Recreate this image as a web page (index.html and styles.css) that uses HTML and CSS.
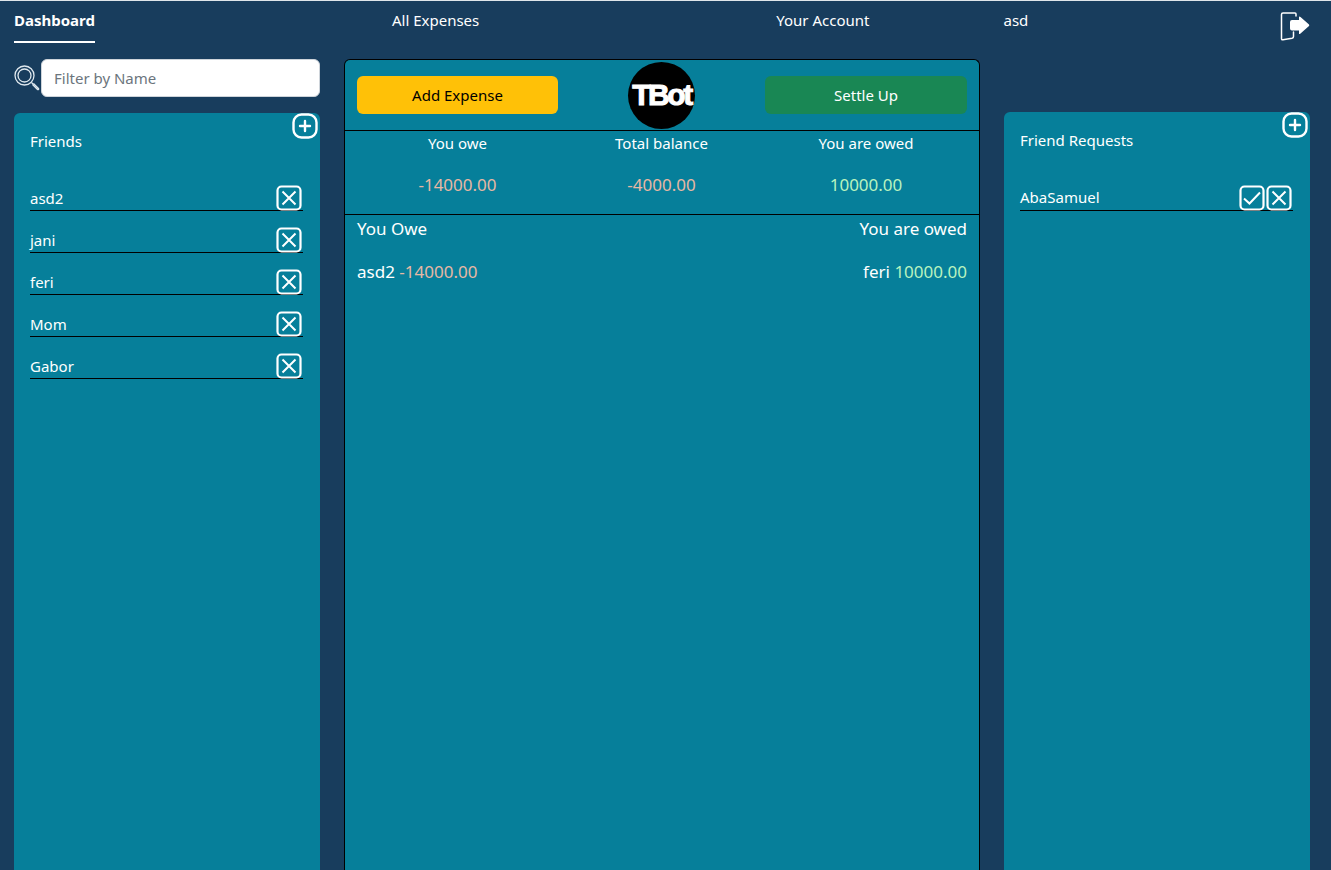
FILE: index.html
```html
<!DOCTYPE html>
<html lang="en">
<head>
    <meta charset="UTF-8">
    <meta name="viewport" content="width=device-width, initial-scale=1.0">
    <title>Dashboard</title>
    <link rel="stylesheet" href="styles.css">
</head>
<body>
    <nav class="topbar">
        <a class="nav-link nav-active">Dashboard</a>
        <a class="nav-link nav-expenses">All Expenses</a>
        <a class="nav-link nav-account">Your Account</a>
        <a class="nav-link nav-user">asd</a>
        <svg class="logout" viewBox="0 0 30 30" width="30" height="30" fill="none">
            <path d="M16 5V3Q16 2 15 2H3Q1.500 2 1.500 3.500V27.500Q1.500 29 3 28.800L12 27.300Q13.500 27 13.500 25.500V21" stroke="#fff" stroke-width="1.500" stroke-linecap="round"/>
            <path d="M10 11q0-2 2-2H19V6Q19 5 20.500 6L29 13.500Q29.500 14.500 29 15L20.500 22.500Q19 23.500 19 22.500V19.500H12q-2 0-2-2Z" fill="#fff"/>
        </svg>
    </nav>

    <main class="layout">
        <section class="col">
            <div class="search-row">
                <svg class="search-icon" viewBox="0 0 26 26" width="26" height="26" fill="none" stroke="#dfe8ee">
                    <circle cx="10.500" cy="10.500" r="9.500" stroke-width="1.300"/>
                    <circle cx="10.500" cy="10.500" r="6.500" stroke-width="1.300"/>
                    <path d="M17.500 17.500l2 2" stroke-width="1.300"/>
                    <path d="M19.500 18.500l5 5M18.500 19.500l5 5M24.500 23.500a.7 .7 0 0 1-1 1" stroke-width="1.300"/>
                </svg>
                <input class="search-input" type="text" placeholder="Filter by Name">
            </div>
            <div class="panel">
                <svg class="icon icon-add" viewBox="0 0 26 26" width="26" height="26" fill="none" stroke="#fff" stroke-width="2.400">
                    <rect x="1.500" y="1.500" width="23" height="23" rx="8"/>
                    <path d="M13 8v10M8 13h10" stroke-linecap="round"/>
                </svg>
                <h2 class="panel-title">Friends</h2>
                <ul class="list">
                    <li class="row"><span class="row-name">asd2</span>
                        <svg class="icon" viewBox="0 0 26 26" width="26" height="26" fill="none" stroke="#fff" stroke-width="2.200"><rect x="1.500" y="1.500" width="23" height="23" rx="4"/><path d="M6.500 6.500l13 13M19.500 6.500l-13 13" stroke-width="2"/></svg>
                    </li>
                    <li class="row"><span class="row-name">jani</span>
                        <svg class="icon" viewBox="0 0 26 26" width="26" height="26" fill="none" stroke="#fff" stroke-width="2.200"><rect x="1.500" y="1.500" width="23" height="23" rx="4"/><path d="M6.500 6.500l13 13M19.500 6.500l-13 13" stroke-width="2"/></svg>
                    </li>
                    <li class="row"><span class="row-name">feri</span>
                        <svg class="icon" viewBox="0 0 26 26" width="26" height="26" fill="none" stroke="#fff" stroke-width="2.200"><rect x="1.500" y="1.500" width="23" height="23" rx="4"/><path d="M6.500 6.500l13 13M19.500 6.500l-13 13" stroke-width="2"/></svg>
                    </li>
                    <li class="row"><span class="row-name">Mom</span>
                        <svg class="icon" viewBox="0 0 26 26" width="26" height="26" fill="none" stroke="#fff" stroke-width="2.200"><rect x="1.500" y="1.500" width="23" height="23" rx="4"/><path d="M6.500 6.500l13 13M19.500 6.500l-13 13" stroke-width="2"/></svg>
                    </li>
                    <li class="row"><span class="row-name">Gabor</span>
                        <svg class="icon" viewBox="0 0 26 26" width="26" height="26" fill="none" stroke="#fff" stroke-width="2.200"><rect x="1.500" y="1.500" width="23" height="23" rx="4"/><path d="M6.500 6.500l13 13M19.500 6.500l-13 13" stroke-width="2"/></svg>
                    </li>
                </ul>
            </div>
        </section>

        <section class="center">
            <div class="center-head">
                <button class="btn btn-yellow">Add Expense</button>
                <div class="logo">TBot</div>
                <button class="btn btn-green">Settle Up</button>
            </div>
            <div class="stats">
                <div class="stat"><div>You owe</div><div class="amount neg">-14000.00</div></div>
                <div class="stat"><div>Total balance</div><div class="amount neg">-4000.00</div></div>
                <div class="stat"><div>You are owed</div><div class="amount pos">10000.00</div></div>
            </div>
            <div class="details">
                <div class="detail-col">
                    <div class="detail-title">You Owe</div>
                    <div class="detail-row">asd2 <span class="neg">-14000.00</span></div>
                </div>
                <div class="detail-col detail-right">
                    <div class="detail-title">You are owed</div>
                    <div class="detail-row">feri <span class="pos">10000.00</span></div>
                </div>
            </div>
        </section>

        <section class="col col-right">
            <div class="panel">
                <svg class="icon icon-add" viewBox="0 0 26 26" width="26" height="26" fill="none" stroke="#fff" stroke-width="2.400">
                    <rect x="1.500" y="1.500" width="23" height="23" rx="8"/>
                    <path d="M13 8v10M8 13h10" stroke-linecap="round"/>
                </svg>
                <h2 class="panel-title">Friend Requests</h2>
                <ul class="list list-requests">
                    <li class="row"><span class="row-name">AbaSamuel</span>
                        <span class="row-actions">
                            <svg class="icon" viewBox="0 0 26 26" width="26" height="26" fill="none" stroke="#fff" stroke-width="2.200"><rect x="1.500" y="1.500" width="23" height="23" rx="4"/><path d="M5 13.500l5.500 5L21 7.500" stroke-width="2"/></svg>
                            <svg class="icon" viewBox="0 0 26 26" width="26" height="26" fill="none" stroke="#fff" stroke-width="2.200"><rect x="1.500" y="1.500" width="23" height="23" rx="4"/><path d="M6.500 6.500l13 13M19.500 6.500l-13 13" stroke-width="2"/></svg>
                        </span>
                    </li>
                </ul>
            </div>
        </section>
    </main>
</body>
</html>
```

FILE: styles.css
```css
html, body {
    height: 100%;
}
body {
    margin: 0;
    overflow: hidden;
    background-color: #183d5d;
    border-top: 1px solid #dfe6ea;
    box-sizing: border-box;
    color: #fff;
    font-family: "Noto Sans", "Open Sans", sans-serif;
    font-size: 15px;
}

/* top navigation */
.topbar {
    display: flex;
    align-items: flex-start;
    height: 58px;
    padding-left: 14px;
    position: relative;
}
.nav-link {
    display: block;
    padding-top: 9px;
    line-height: 21px;
}
.nav-active {
    font-weight: 700;
    height: 31px;
    border-bottom: 2px solid #fff;
}
.nav-expenses {
    margin-left: 297px;
}
.nav-account {
    margin-left: 297px;
}
.nav-user {
    margin-left: 134px;
}
.logout {
    position: absolute;
    left: 1280px;
    top: 10px;
}

/* three columns */
.layout {
    display: grid;
    grid-template-columns: 306px 636px 306px;
    gap: 24px;
    padding-left: 14px;
    height: 811px;
}
.col {
    display: flex;
    flex-direction: column;
    gap: 16px;
}
.col-right {
    padding-top: 53px;
}

.search-row {
    display: flex;
    align-items: center;
    gap: 1px;
    height: 38px;
}
.search-icon {
    flex: none;
}
.search-input {
    flex: 1;
    min-width: 0;
    height: 38px;
    box-sizing: border-box;
    padding: 0 12px;
    border: 1px solid #ced4da;
    border-radius: 6px;
    font-family: inherit;
    font-size: 15px;
    color: #333;
}
.search-input::placeholder {
    color: #6c757d;
}

.panel {
    flex: 1;
    position: relative;
    background-color: #067f9a;
    border-radius: 6px 6px 0 0;
    padding: 16px;
}
.panel-title {
    margin: 0;
    font-size: 15px;
    font-weight: 400;
    line-height: 24px;
}
.icon {
    display: block;
    flex: none;
}
.icon-add {
    position: absolute;
    top: 0;
    right: 2px;
}
.list {
    list-style: none;
    margin: 32px 0 0;
    padding: 0;
}
.list-requests {
    margin-top: 33px;
}
.list-requests .row-name {
    margin-bottom: 2px;
}
.row {
    display: flex;
    justify-content: space-between;
    align-items: flex-end;
    height: 25px;
    margin-bottom: 16px;
    border-bottom: 1px solid #000;
    margin-right: 1px;
    line-height: 22px;
}
.row-name {
    margin-bottom: 1px;
}
.row .icon {
    margin: 0 1px -1px 0;
}
.row-actions {
    display: flex;
    gap: 0;
}

/* middle panel */
.center {
    background-color: #067f9a;
    border: 1px solid #000;
    border-bottom: none;
    border-radius: 6px 6px 0 0;
    box-sizing: border-box;
}
.center-head {
    display: grid;
    grid-template-columns: 201px 1fr 202px;
    align-items: center;
    height: 70px;
    padding: 0 12px;
    border-bottom: 1px solid #000;
}
.btn {
    height: 38px;
    border: none;
    border-radius: 6px;
    font-family: inherit;
    font-size: 15px;
}
.btn-yellow {
    background-color: #ffc107;
    color: #000;
}
.btn-green {
    background-color: #198754;
    color: #fff;
}
.logo {
    justify-self: center;
    width: 67px;
    height: 67px;
    border-radius: 50%;
    background-color: #000;
    color: #fff;
    display: flex;
    align-items: center;
    justify-content: center;
    font-family: "Liberation Sans", sans-serif;
    font-size: 30px;
    font-weight: 700;
    letter-spacing: -2.400px;
    -webkit-text-stroke: 1px #fff;
}
.stats {
    display: grid;
    grid-template-columns: 201px 1fr 202px;
    padding: 0 12px;
    height: 83px;
    border-bottom: 1px solid #000;
    text-align: center;
}
.stat {
    line-height: 24px;
}
.amount {
    margin-top: 18px;
    font-size: 17px;
}
.neg {
    color: #e8b8a4;
}
.pos {
    color: #b9f3bf;
}
.details {
    display: flex;
    justify-content: space-between;
    padding: 0 12px;
}
.detail-right {
    text-align: right;
}
.detail-title {
    font-size: 17px;
    line-height: 28px;
}
.detail-row {
    margin-top: 15px;
    font-size: 17px;
    line-height: 28px;
}
```
